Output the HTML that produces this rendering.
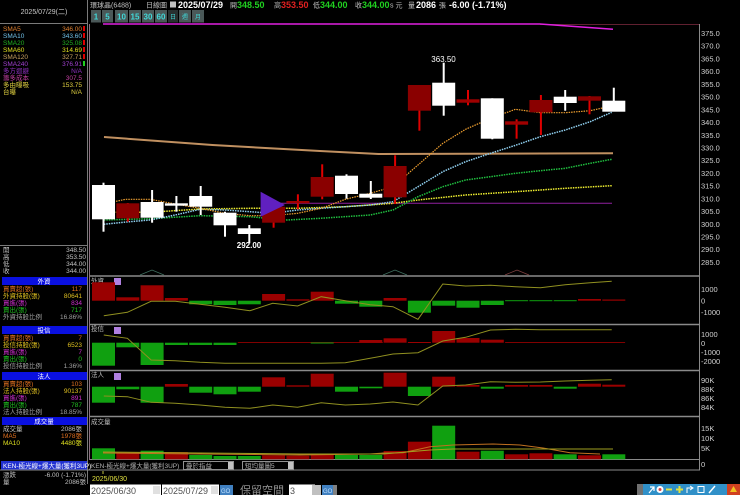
<!DOCTYPE html>
<html><head><meta charset="utf-8"><style>
html,body{margin:0;padding:0;background:#000;width:740px;height:495px;overflow:hidden}
svg{display:block}
text{font-family:"Liberation Sans","Noto Sans CJK TC",sans-serif}
</style></head><body>
<svg width="740" height="495" viewBox="0 0 740 495" xmlns="http://www.w3.org/2000/svg">
<rect width="740" height="495" fill="#000"/>
<!-- left panel frame -->
<g stroke="#7a7a7a" stroke-width="1" fill="none">
<line x1="87.5" y1="0" x2="87.5" y2="484"/>
<line x1="0" y1="23.5" x2="88" y2="23.5"/>
<line x1="0" y1="245.5" x2="88" y2="245.5"/>
</g>
<text x="44" y="14" font-size="7" fill="#c8c8c8" text-anchor="middle">2025/07/29(二)</text>
<g font-size="6.5">
<text x="3" y="31" fill="#e08030">SMA5</text><text x="82" y="31" fill="#e08030" text-anchor="end">346.00</text>
<text x="3" y="38" fill="#70c0e8">SMA10</text><text x="82" y="38" fill="#70c0e8" text-anchor="end">343.60</text>
<text x="3" y="45" fill="#20b020">SMA20</text><text x="82" y="45" fill="#20b020" text-anchor="end">325.08</text>
<text x="3" y="52" fill="#e0e020">SMA60</text><text x="82" y="52" fill="#e0e020" text-anchor="end">314.69</text>
<text x="3" y="59" fill="#c8a060">SMA120</text><text x="82" y="59" fill="#c8a060" text-anchor="end">327.71</text>
<text x="3" y="66" fill="#a040d0">SMA240</text><text x="82" y="66" fill="#a040d0" text-anchor="end">376.91</text>
<text x="3" y="73" fill="#9030c0">多方迴避</text><text x="82" y="73" fill="#9030c0" text-anchor="end">N/A</text>
<text x="3" y="80" fill="#c040a0">籌多成本</text><text x="82" y="80" fill="#c040a0" text-anchor="end">307.5</text>
<text x="3" y="87" fill="#e0d040">多由曝吸</text><text x="82" y="87" fill="#e0d040" text-anchor="end">153.75</text>
<text x="3" y="94" fill="#e0d040">台曝</text><text x="82" y="94" fill="#e0d040" text-anchor="end">N/A</text>
</g>
<g fill="#e00000"><rect x="83" y="26" width="2" height="5"/><rect x="83" y="33" width="2" height="5"/><rect x="83" y="40" width="2" height="5"/><rect x="83" y="47" width="2" height="5"/><rect x="83" y="54" width="2" height="5"/></g>
<rect x="83" y="61" width="2" height="5" fill="#20d020"/>
<g font-size="6.5" fill="#c0c0c0">
<text x="3" y="252">開</text><text x="86" y="252" text-anchor="end">348.50</text>
<text x="3" y="259">高</text><text x="86" y="259" text-anchor="end">353.50</text>
<text x="3" y="266">低</text><text x="86" y="266" text-anchor="end">344.00</text>
<text x="3" y="273">收</text><text x="86" y="273" text-anchor="end">344.00</text>
</g>
<!-- blocks -->
<g font-size="6.5">
<rect x="2" y="277" width="85" height="8" fill="#0a10e0"/><text x="44" y="283.5" fill="#fff" text-anchor="middle">外資</text>
<text x="3" y="291" fill="#e07020">買賣超(張)</text><text x="82" y="291" fill="#e07020" text-anchor="end">117</text>
<text x="3" y="298" fill="#e0c020">外資持股(張)</text><text x="82" y="298" fill="#e0c020" text-anchor="end">80641</text>
<text x="3" y="305" fill="#d030d0">買進(張)</text><text x="82" y="305" fill="#d030d0" text-anchor="end">834</text>
<text x="3" y="312" fill="#20c020">賣出(張)</text><text x="82" y="312" fill="#20c020" text-anchor="end">717</text>
<text x="3" y="319" fill="#a0a0a0">外資持股比例</text><text x="82" y="319" fill="#a0a0a0" text-anchor="end">16.86%</text>
<rect x="2" y="326" width="85" height="8" fill="#0a10e0"/><text x="44" y="332.5" fill="#fff" text-anchor="middle">投信</text>
<text x="3" y="340" fill="#e07020">買賣超(張)</text><text x="82" y="340" fill="#e07020" text-anchor="end">7</text>
<text x="3" y="347" fill="#e0c020">投信持股(張)</text><text x="82" y="347" fill="#e0c020" text-anchor="end">6523</text>
<text x="3" y="354" fill="#d030d0">買進(張)</text><text x="82" y="354" fill="#d030d0" text-anchor="end">7</text>
<text x="3" y="361" fill="#20c020">賣出(張)</text><text x="82" y="361" fill="#20c020" text-anchor="end">0</text>
<text x="3" y="368" fill="#a0a0a0">投信持股比例</text><text x="82" y="368" fill="#a0a0a0" text-anchor="end">1.36%</text>
<rect x="2" y="372" width="85" height="8" fill="#0a10e0"/><text x="44" y="378.5" fill="#fff" text-anchor="middle">法人</text>
<text x="3" y="386" fill="#e07020">買賣超(張)</text><text x="82" y="386" fill="#e07020" text-anchor="end">103</text>
<text x="3" y="393" fill="#e0c020">法人持股(張)</text><text x="82" y="393" fill="#e0c020" text-anchor="end">90137</text>
<text x="3" y="400" fill="#d030d0">買進(張)</text><text x="82" y="400" fill="#d030d0" text-anchor="end">891</text>
<text x="3" y="407" fill="#20c020">賣出(張)</text><text x="82" y="407" fill="#20c020" text-anchor="end">787</text>
<text x="3" y="414" fill="#a0a0a0">法人持股比例</text><text x="82" y="414" fill="#a0a0a0" text-anchor="end">18.85%</text>
<rect x="2" y="417" width="85" height="8" fill="#0a10e0"/><text x="44" y="423.5" fill="#fff" text-anchor="middle">成交量</text>
<text x="3" y="431" fill="#c0c0c0">成交量</text><text x="82" y="431" fill="#c0c0c0" text-anchor="end">2086張</text>
<text x="3" y="438" fill="#e07020">MA5</text><text x="82" y="438" fill="#e07020" text-anchor="end">1978張</text>
<text x="3" y="445" fill="#e0e020">MA10</text><text x="82" y="445" fill="#e0e020" text-anchor="end">4480張</text>
<rect x="1" y="461" width="86" height="9" fill="#2030d0"/><text x="3" y="468" fill="#fff">KEN-極光線+爆大量(獲利3UP)</text>
<text x="3" y="477" fill="#c0c0c0">漲跌</text><text x="86" y="477" fill="#c0c0c0" text-anchor="end">-6.00 (-1.71%)</text>
<text x="3" y="484" fill="#c0c0c0">量</text><text x="86" y="484" fill="#c0c0c0" text-anchor="end">2086張</text>
</g>
<!-- top header -->
<g font-size="7" fill="#c0c0c0">
<text x="90" y="7.5">環球晶(6488)</text>
<text x="146" y="7.5">日線圖</text>
<rect x="170" y="1.5" width="6" height="6" fill="#c0c0c0"/>
<text x="178" y="8" font-size="9" font-weight="bold" fill="#fff">2025/07/29</text>
<text x="230" y="7.5">開</text><text x="237" y="8" font-size="9" font-weight="bold" fill="#20d020">348.50</text>
<text x="274" y="7.5">高</text><text x="281" y="8" font-size="9" font-weight="bold" fill="#e02020">353.50</text>
<text x="313" y="7.5">低</text><text x="320" y="8" font-size="9" font-weight="bold" fill="#20d020">344.00</text>
<text x="355" y="7.5">收</text><text x="362" y="8" font-size="9" font-weight="bold" fill="#20d020">344.00</text>
<text x="390" y="7.5">s 元</text>
<text x="408" y="7.5">量</text><text x="416" y="8" font-size="9" font-weight="bold" fill="#fff">2086</text>
<text x="439" y="7.5">張</text><text x="449" y="8" font-size="9" font-weight="bold" fill="#fff">-6.00 (-1.71%)</text>
</g>
<g font-size="8" font-weight="bold" fill="#40d8d8" text-anchor="middle">
<rect x="91" y="10" width="10" height="12.5" fill="#4a5858"/><text x="96" y="19.5">1</text>
<rect x="102" y="10" width="11" height="12.5" fill="#4a5858"/><text x="107.5" y="19.5">5</text>
<rect x="115" y="10" width="13" height="12.5" fill="#4a5858"/><text x="121.5" y="19.5">10</text>
<rect x="129" y="10" width="12" height="12.5" fill="#4a5858"/><text x="135" y="19.5">15</text>
<rect x="142" y="10" width="12" height="12.5" fill="#4a5858"/><text x="148" y="19.5">30</text>
<rect x="155" y="10" width="12" height="12.5" fill="#4a5858"/><text x="161" y="19.5">60</text>
<rect x="168" y="10" width="10" height="12.5" fill="#283030"/><text x="173" y="19" font-size="6" font-weight="normal">日</text>
<rect x="179" y="10" width="12" height="12.5" fill="#4a5858"/><text x="185" y="19" font-size="6" font-weight="normal">週</text>
<rect x="192" y="10" width="12" height="12.5" fill="#4a5858"/><text x="198" y="19" font-size="6" font-weight="normal">月</text>
</g>
<!-- chart frames -->
<g stroke="#8a7080" fill="none">
<line x1="89.5" y1="24" x2="89.5" y2="460"/>
<line x1="540" y1="24.5" x2="699" y2="24.5" stroke="#602030"/>
<line x1="699.5" y1="24" x2="699.5" y2="470" stroke="#8a8a8a"/>
</g>
<g stroke="#8a8a8a" stroke-width="1.5">
<line x1="90" y1="276" x2="700" y2="276"/>
<line x1="90" y1="324.5" x2="700" y2="324.5"/>
<line x1="90" y1="370.5" x2="700" y2="370.5"/>
<line x1="90" y1="416.5" x2="700" y2="416.5"/>
<line x1="90" y1="459.5" x2="700" y2="459.5" stroke-width="1"/>
<line x1="0" y1="470" x2="700" y2="470" stroke-width="1"/>
</g>
<!-- magenta top -->
<polyline points="103,24 540,24 613,29.3" stroke="#e020e0" stroke-width="1.5" fill="none"/>
<!-- axis labels -->
<g font-size="7.5" fill="#d0d0d0">
<text x="701" y="36">375.0</text><text x="701" y="48.7">370.0</text><text x="701" y="61.4">365.0</text><text x="701" y="74.2">360.0</text><text x="701" y="86.9">355.0</text><text x="701" y="99.6">350.0</text><text x="701" y="112.3">345.0</text><text x="701" y="125">340.0</text><text x="701" y="137.8">335.0</text><text x="701" y="150.5">330.0</text><text x="701" y="163.2">325.0</text><text x="701" y="175.9">320.0</text><text x="701" y="188.6">315.0</text><text x="701" y="201.4">310.0</text><text x="701" y="214.1">305.0</text><text x="701" y="226.8">300.0</text><text x="701" y="239.5">295.0</text><text x="701" y="252.2">290.0</text><text x="701" y="265">285.0</text>
<text x="701" y="292">1000</text><text x="701" y="303.5">0</text><text x="701" y="315">-1000</text>
<text x="701" y="337">1000</text><text x="701" y="346">0</text><text x="701" y="355">-1000</text><text x="701" y="364">-2000</text>
<text x="701" y="383">90K</text><text x="701" y="392">88K</text><text x="701" y="401">86K</text><text x="701" y="410">84K</text>
<text x="701" y="431">15K</text><text x="701" y="441">10K</text><text x="701" y="451">5K</text><text x="701" y="467">0</text>
</g>
<!-- bottom triangles -->
<g fill="none" stroke="#407060" stroke-width="0.8"><polyline points="140,275 152,270 164,275"/><polyline points="383,275 395,270 407,275"/><polyline points="505,275 517,270 529,275" stroke="#804040"/></g>
<!-- MAs -->
<polyline points="104,137 212.5,145 320,151 378.5,154 613,153.3" stroke="#c09060" stroke-width="2" fill="none"/>
<line x1="273" y1="203.3" x2="612" y2="203.3" stroke="#9020a0" stroke-width="1"/>
<polyline points="103.8,212.3 150.3,212.3 200,209 249.9,208.3 297.6,208.3 345.3,206.7 393,203.3 418,200 465.6,195 515.5,191.7 565.2,188.3 611.7,185.7" stroke="#f0f030" stroke-width="1.5" stroke-dasharray="1.5,1" fill="none"/>
<polyline points="103.8,220 150.3,218.7 200,215.7 249.9,216.7 287.2,220 320.4,218.3 370.2,215 393,210 418,196.7 442.8,186.7 465.6,180 490.5,176.7 515.5,173.3 540.4,170.7 565.2,168.3 590.2,163.3 611.7,159.3" stroke="#20c040" stroke-width="1.5" stroke-dasharray="1.5,1" fill="none"/>
<polyline points="103.8,224.3 129.5,221.7 150.3,220 175.2,215 200,209.3 225,210 249.9,211.7 272.7,213.3 297.6,210 321.2,208.3 345.3,206.7 370.2,205 393,201.7 418,186.7 442.8,171.7 465.6,161.7 490.5,153.3 515.5,145.3 540.4,136.7 565.2,130 590.2,121.7 611.7,112.3" stroke="#90d0f0" stroke-width="1.5" stroke-dasharray="1.5,1" fill="none"/>
<polyline points="103.8,204 125.4,199.3 150.3,199.3 175.2,204 200,208.3 225,213.3 249.9,215.7 272.7,215.7 297.6,213.3 321.2,208.3 345.3,199.3 370.2,193.3 393,186.7 418,165 442.8,143.3 465.6,129.3 490.5,118.3 515.5,109.3 540.4,112.7 565.2,112.7 590.2,110.7 611.7,106" stroke="#f0a030" stroke-width="1.2" stroke-dasharray="1.5,1" fill="none"/>
<!-- candles -->
<g stroke-width="2">
<line x1="103.5" y1="182.7" x2="103.5" y2="231.7" stroke="#fff"/><rect x="92" y="185" width="23" height="34.3" fill="#fff" stroke="none"/>
<line x1="127.8" y1="203" x2="127.8" y2="221.7" stroke="#e00000"/><rect x="116.3" y="203.3" width="23" height="15" fill="#8a0000" stroke="none"/>
<line x1="152.1" y1="190" x2="152.1" y2="222.7" stroke="#fff"/><rect x="140.6" y="202" width="23" height="15.7" fill="#fff" stroke="none"/>
<line x1="176.4" y1="196" x2="176.4" y2="211.7" stroke="#fff"/><rect x="164.9" y="203.3" width="23" height="2.4" fill="#fff" stroke="none"/>
<line x1="200.7" y1="186" x2="200.7" y2="215" stroke="#fff"/><rect x="189.2" y="196" width="23" height="10.7" fill="#fff" stroke="none"/>
<line x1="225" y1="211.7" x2="225" y2="236.7" stroke="#fff"/><rect x="213.5" y="212.7" width="23" height="12.6" fill="#fff" stroke="none"/>
<line x1="249.3" y1="225" x2="249.3" y2="243.3" stroke="#fff"/><rect x="237.8" y="228.3" width="23" height="5.7" fill="#fff" stroke="none"/>
<line x1="273.6" y1="206" x2="273.6" y2="227.7" stroke="#e00000"/><rect x="262.1" y="206.7" width="23" height="16" fill="#8a0000" stroke="none"/>
<polygon points="260.6,191.7 260.6,216.7 285,205" fill="#6020c0"/>
<line x1="297.9" y1="194.3" x2="297.9" y2="209.3" stroke="#e00000"/><rect x="286.4" y="201" width="23" height="2.3" fill="#a00000" stroke="none"/>
<line x1="322.2" y1="164.3" x2="322.2" y2="199.3" stroke="#e00000"/><rect x="310.7" y="177" width="23" height="19.7" fill="#8a0000" stroke="none"/>
<line x1="346.5" y1="174.3" x2="346.5" y2="198.7" stroke="#fff"/><rect x="335" y="175.7" width="23" height="18.3" fill="#fff" stroke="none"/>
<line x1="370.8" y1="181" x2="370.8" y2="199" stroke="#fff"/><rect x="359.3" y="193.7" width="23" height="4" fill="#fff" stroke="none"/>
<line x1="395.1" y1="155.3" x2="395.1" y2="204" stroke="#e00000"/><rect x="383.6" y="166" width="23" height="31.3" fill="#8a0000" stroke="none"/>
<line x1="419.4" y1="85" x2="419.4" y2="130.7" stroke="#e00000"/><rect x="407.9" y="85" width="23" height="25.7" fill="#8a0000" stroke="none"/>
<line x1="443.7" y1="62.7" x2="443.7" y2="115.7" stroke="#fff"/><rect x="432.2" y="82.7" width="23" height="23" fill="#fff" stroke="none"/>
<line x1="468" y1="90" x2="468" y2="105.3" stroke="#e00000"/><rect x="456.5" y="99.3" width="23" height="3.4" fill="#a00000" stroke="none"/>
<line x1="492.3" y1="98.3" x2="492.3" y2="139.3" stroke="#fff"/><rect x="480.8" y="98.3" width="23" height="40.4" fill="#fff" stroke="none"/>
<line x1="516.6" y1="119.3" x2="516.6" y2="138.7" stroke="#e00000"/><rect x="505.1" y="121.3" width="23" height="3.4" fill="#a00000" stroke="none"/>
<line x1="540.9" y1="95" x2="540.9" y2="135" stroke="#e00000"/><rect x="529.4" y="100" width="23" height="12.3" fill="#8a0000" stroke="none"/>
<line x1="565.2" y1="90" x2="565.2" y2="110.7" stroke="#fff"/><rect x="553.7" y="96.7" width="23" height="6.3" fill="#fff" stroke="none"/>
<line x1="589.5" y1="96" x2="589.5" y2="114.3" stroke="#e00000"/><rect x="578" y="96.3" width="23" height="4.4" fill="#8a0000" stroke="none"/>
<line x1="613.8" y1="87.7" x2="613.8" y2="105" stroke="#fff"/><rect x="602.3" y="100.7" width="23" height="11" fill="#fff" stroke="none"/>
</g>
<text x="443.5" y="62" font-size="8" fill="#fff" text-anchor="middle">363.50</text>
<text x="249" y="248" font-size="8" font-weight="bold" fill="#fff" text-anchor="middle">292.00</text>
<!-- panel labels -->
<g font-size="6.5" fill="#c0c0c0"><text x="91" y="283">外資</text><text x="91" y="331">投信</text><text x="91" y="377">法人</text><text x="91" y="424">成交量</text></g>
<g fill="#b080e0"><rect x="114" y="278" width="7" height="7"/><rect x="114" y="327" width="7" height="7"/><rect x="114" y="373" width="7" height="7"/></g>
<!-- panel1 bars -->
<g id="p1">
<rect x="92" y="282.3" width="23" height="18.4" fill="#9a0000"/><rect x="116.3" y="297.3" width="23" height="3.4" fill="#9a0000"/><rect x="140.6" y="285.3" width="23" height="15.4" fill="#9a0000"/><rect x="164.9" y="298" width="23" height="2.7" fill="#9a0000"/>
<rect x="189.2" y="300.7" width="23" height="3.6" fill="#10a010"/><rect x="213.5" y="300.7" width="23" height="4.3" fill="#10a010"/><rect x="237.8" y="300.7" width="23" height="3.6" fill="#10a010"/>
<rect x="262.1" y="294" width="23" height="6.7" fill="#9a0000"/><rect x="286.4" y="299.3" width="23" height="1.4" fill="#9a0000"/><rect x="310.7" y="291.7" width="23" height="9" fill="#9a0000"/>
<rect x="335" y="300.7" width="23" height="3" fill="#10a010"/><rect x="359.3" y="300.7" width="23" height="6" fill="#10a010"/><rect x="383.6" y="298" width="23" height="2.7" fill="#9a0000"/>
<rect x="407.9" y="300.7" width="23" height="12" fill="#10a010"/><rect x="432.2" y="300.7" width="23" height="5" fill="#10a010"/><rect x="456.5" y="300.7" width="23" height="7" fill="#10a010"/><rect x="480.8" y="300.7" width="23" height="4.3" fill="#10a010"/>
<rect x="505.1" y="300.2" width="23" height="1" fill="#10a010"/><rect x="529.4" y="300.2" width="23" height="1" fill="#10a010"/><rect x="553.7" y="300.2" width="23" height="1" fill="#10a010"/>
<rect x="578" y="299" width="23" height="1.7" fill="#9a0000"/><rect x="602.3" y="299.5" width="23" height="1.2" fill="#9a0000"/>
</g>
<polyline points="103.8,315.7 127.4,312.3 151.1,301.3 175.2,301.3 200,304.3 225,307.3 249.9,310.7 272.7,303.3 297.6,306 321.2,296.7 345.3,300.7 370.2,304.7 393,306.7 418,319.3 442.8,284 465.6,286 490.5,285.3 515.5,286.7 540.4,287.7 565.2,284.7 590.2,282.7 611.7,281.3" stroke="#909020" stroke-width="1" fill="none"/>
<!-- panel2 bars -->
<rect x="92" y="342.7" width="23" height="23" fill="#10a010"/><rect x="116.3" y="342.7" width="23" height="4.6" fill="#10a010"/><rect x="140.6" y="342.7" width="23" height="22.3" fill="#10a010"/>
<rect x="164.9" y="342.7" width="23" height="2.3" fill="#10a010"/><rect x="189.2" y="342.7" width="23" height="2.3" fill="#10a010"/><rect x="213.5" y="342.7" width="23" height="2.3" fill="#10a010"/>
<rect x="237.8" y="342" width="145" height="1" fill="#800000"/>
<rect x="310.7" y="342.5" width="23" height="1" fill="#10a010"/>
<rect x="359.3" y="340" width="23" height="2.7" fill="#9a0000"/><rect x="383.6" y="338.3" width="23" height="4.4" fill="#9a0000"/><rect x="407.9" y="342" width="23" height="1" fill="#9a0000"/>
<rect x="432.2" y="331" width="23" height="11.7" fill="#9a0000"/><rect x="456.5" y="338" width="23" height="4.7" fill="#9a0000"/><rect x="480.8" y="339.7" width="23" height="3" fill="#9a0000"/>
<rect x="505.1" y="342" width="120" height="1" fill="#800000"/>
<polyline points="103.8,335 127.4,338.3 151.1,360 175.2,360.7 200,362.3 225,363.3 249.9,363.3 272.7,363.3 297.6,363.3 321.2,363.3 345.3,362.7 370.2,358.3 393,354 418,352.7 442.8,341 465.6,337.3 490.5,330 515.5,329.3 540.4,329.7 565.2,329.7 590.2,329.7 611.7,329.7" stroke="#909020" stroke-width="1" fill="none"/>
<!-- panel3 bars -->
<rect x="92" y="386.7" width="23" height="16" fill="#10a010"/><rect x="116.3" y="386.7" width="23" height="2.6" fill="#10a010"/><rect x="140.6" y="386.7" width="23" height="16" fill="#10a010"/>
<rect x="164.9" y="384" width="23" height="2.7" fill="#9a0000"/><rect x="189.2" y="386.7" width="23" height="6" fill="#10a010"/><rect x="213.5" y="386.7" width="23" height="7.6" fill="#10a010"/><rect x="237.8" y="386.7" width="23" height="5" fill="#10a010"/>
<rect x="262.1" y="377.3" width="23" height="9.4" fill="#9a0000"/><rect x="286.4" y="385.3" width="23" height="1.4" fill="#9a0000"/><rect x="310.7" y="373.7" width="23" height="13" fill="#9a0000"/>
<rect x="335" y="386.7" width="23" height="5" fill="#10a010"/><rect x="359.3" y="386.7" width="23" height="1.6" fill="#10a010"/><rect x="383.6" y="372.7" width="23" height="14" fill="#9a0000"/>
<rect x="407.9" y="386.7" width="23" height="9.3" fill="#10a010"/><rect x="432.2" y="376.7" width="23" height="10" fill="#9a0000"/><rect x="456.5" y="385" width="23" height="1.7" fill="#9a0000"/>
<rect x="480.8" y="386.7" width="23" height="2" fill="#10a010"/><rect x="505.1" y="385" width="23" height="1.7" fill="#9a0000"/><rect x="529.4" y="385" width="23" height="1.7" fill="#9a0000"/>
<rect x="553.7" y="386.7" width="23" height="2" fill="#10a010"/><rect x="578" y="383.7" width="23" height="3" fill="#9a0000"/><rect x="602.3" y="384.7" width="23" height="2" fill="#9a0000"/>
<polyline points="103.8,396 127.4,396.7 151.1,402.3 175.2,403.3 200,405 225,407.3 249.9,408.3 272.7,405 297.6,407.3 321.2,402.7 345.3,405 370.2,404 393,402 418,405 442.8,386 465.6,385 490.5,381.7 515.5,382.3 540.4,382 565.2,381 590.2,380.3 611.7,379.7" stroke="#909020" stroke-width="1" fill="none"/>
<!-- volume -->
<g>
<rect x="92" y="448.3" width="23" height="11" fill="#10a010"/><rect x="116.3" y="452" width="23" height="7.3" fill="#9a0000"/><rect x="140.6" y="450.7" width="23" height="8.6" fill="#10a010"/><rect x="164.9" y="452" width="23" height="7.3" fill="#9a0000"/>
<rect x="189.2" y="455" width="23" height="4.3" fill="#10a010"/><rect x="213.5" y="456" width="23" height="3.3" fill="#10a010"/><rect x="237.8" y="456" width="23" height="3.3" fill="#10a010"/>
<rect x="262.1" y="455.3" width="23" height="4" fill="#9a0000"/><rect x="286.4" y="455.7" width="23" height="3.6" fill="#9a0000"/><rect x="310.7" y="453.7" width="23" height="5.6" fill="#9a0000"/>
<rect x="335" y="455" width="23" height="4.3" fill="#10a010"/><rect x="359.3" y="455" width="23" height="4.3" fill="#10a010"/><rect x="383.6" y="451" width="23" height="8.3" fill="#9a0000"/>
<rect x="407.9" y="441.7" width="23" height="17.6" fill="#9a0000"/><rect x="432.2" y="425.7" width="23" height="33.6" fill="#10a010"/><rect x="456.5" y="451.7" width="23" height="7.6" fill="#9a0000"/>
<rect x="480.8" y="450.7" width="23" height="8.6" fill="#10a010"/><rect x="505.1" y="454.3" width="23" height="5" fill="#9a0000"/><rect x="529.4" y="453.3" width="23" height="6" fill="#9a0000"/>
<rect x="553.7" y="454.3" width="23" height="5" fill="#10a010"/><rect x="578" y="455.3" width="23" height="4" fill="#9a0000"/><rect x="602.3" y="454.3" width="23" height="5" fill="#10a010"/>
</g>
<polyline points="103,453 200,454 300,455 370,454 383,453 403,452.7 430,446.7 453,445 493,444 520,445 543,448 570,452.7 600,454" stroke="#c07020" stroke-width="1" fill="none"/>
<polyline points="103,452 200,453 300,454 383,454 430,450 453,449 613,449" stroke="#a0a020" stroke-width="1" fill="none"/>
<!-- dropdown row -->
<g font-size="6.5" fill="#b0b0b0">
<text x="91" y="468">KEN-極光線+爆大量(獲利3UP)</text>
<rect x="183.5" y="461.5" width="50" height="8" fill="#000" stroke="#909090"/><text x="186" y="468">疊於指益</text><rect x="228" y="462" width="5" height="7" fill="#c0c0c0"/>
<rect x="242.5" y="461.5" width="51" height="8" fill="#000" stroke="#909090"/><text x="245" y="468">短均量圖5</text><rect x="288" y="462" width="5" height="7" fill="#c0c0c0"/>
</g>
<line x1="103" y1="471" x2="103" y2="474" stroke="#c0c040"/>
<text x="92" y="481" font-size="7" fill="#e0e040">2025/06/30</text>
<!-- bottom controls -->
<rect x="89" y="484" width="651" height="11" fill="#000"/>
<g font-size="9" fill="#505050">
<rect x="90" y="484.5" width="71" height="10.5" fill="#fff"/><text x="91" y="494">2025/06/30</text><rect x="153" y="486" width="7" height="8" fill="#e0e0e0"/>
<text x="164" y="494" fill="#c0c0c0">~</text>
<rect x="162" y="484.5" width="57" height="10.5" fill="#fff"/><text x="163" y="494">2025/07/29</text><rect x="211" y="486" width="7" height="8" fill="#e0e0e0"/>
<rect x="220" y="485" width="13" height="10" fill="#4080c0"/><text x="221" y="493" font-size="6" fill="#c0e0ff">GO</text>
<text x="240" y="494" font-size="11" fill="#909090">保留空間</text>
<rect x="289" y="484.5" width="26" height="10.5" fill="#fff"/><text x="290" y="494">3</text><rect x="312" y="485" width="9" height="10" fill="#c0c0c0"/>
<rect x="322" y="485" width="11" height="10" fill="#4080c0"/><text x="323" y="493" font-size="6" fill="#c0e0ff">GO</text>
<rect x="333" y="485" width="4" height="10" fill="#808080"/>
</g>
<rect x="637" y="484" width="103" height="11" fill="#3090c8"/>
<rect x="637" y="484" width="6" height="11" fill="#707070"/>
<g fill="#fff" stroke="#fff" stroke-width="1.2">
<path d="M649,493 L654,487 M650,487 L654,487 L654,491" fill="none"/>
<circle cx="660" cy="489.5" r="3.5" fill="#fff" stroke="none"/><circle cx="660" cy="489.5" r="1.5" fill="#e04040" stroke="none"/>
<line x1="666" y1="489.5" x2="672" y2="489.5" stroke="#e0e040" stroke-width="2"/>
<path d="M676,489.5 H683 M679.5,486 V493" stroke="#e0e040" stroke-width="2"/>
<path d="M687,493 V488 H693 M690,486 L693,488 L690,490" fill="none" stroke-width="1"/>
<rect x="698" y="486.5" width="6" height="6" fill="none" stroke-width="1"/>
<line x1="709" y1="493" x2="715" y2="486" stroke-width="1.5"/>
</g>
<rect x="727" y="484" width="13" height="11" fill="#d04020"/>
<path d="M730,492 L733.5,486 L737,492 Z" fill="#f0c020"/>
</svg>
</body></html>
